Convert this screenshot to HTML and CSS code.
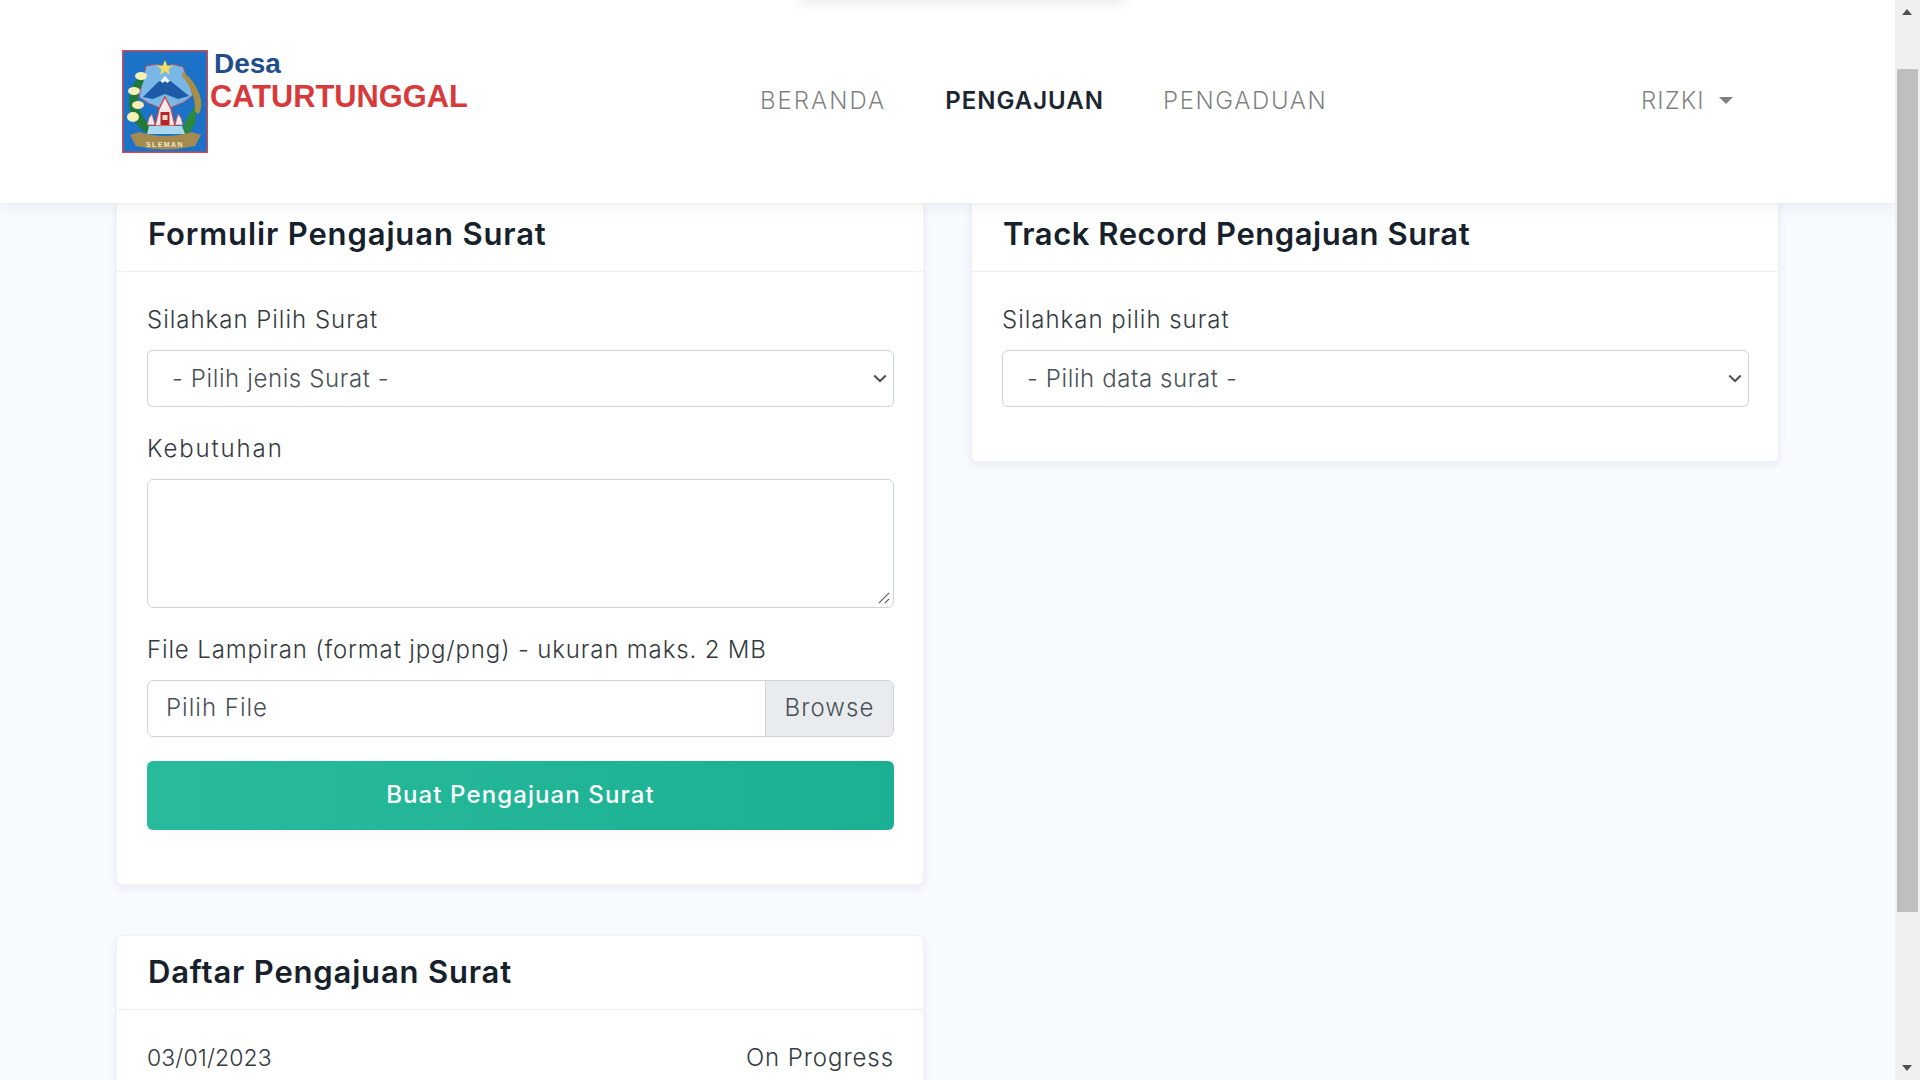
FILE: index.html
```html
<!DOCTYPE html>
<html lang="id">
<head>
<meta charset="utf-8">
<title>Desa Caturtunggal</title>
<link rel="stylesheet" href="styles.css">
</head>
<body>
<div class="app">
  <div class="viewport">
    <header class="navbar">
      <span class="offscreen-menu"></span>
      <a class="brand" href="#">
        <svg class="emblem" viewBox="0 0 86 103" aria-hidden="true">
          <rect x="0.7" y="0.7" width="84.6" height="101.6" fill="#1b72c6" stroke="#d9484f" stroke-width="1.4"/>
          <!-- shield -->
          <path d="M24 16 L36 14 L43 22 L50 14 L61 17 L71 45 L62 52 L43 60 L26 53 L17 47 Z" fill="#79b7e6" stroke="#b7525f" stroke-width="1"/>
          <!-- mountain -->
          <path d="M21 47 L35 33 L43 27 L51 33 L67 46 L56 49 L43 44 L31 49 Z" fill="#1d5ba6"/>
          <path d="M38 31 L43 26 L48 31 L45 33 L43 31 L41 33 Z" fill="#eef6fc"/>
          <!-- star -->
          <path d="M43 10 L45.2 15.4 L51 15.6 L46.5 19.2 L48 24.8 L43 21.6 L38 24.8 L39.5 19.2 L35 15.6 L40.8 15.4 Z" fill="#f2dc64"/>
          <!-- left garland -->
          <path d="M17 27 Q6 38 7 54 Q8 68 18 78 L26 84 L30 78 Q20 68 17 58 Q13 44 22 31 Z" fill="#1f7a3a"/>
          <ellipse cx="19" cy="26" rx="6" ry="4" fill="#f6efb4"/>
          <ellipse cx="12" cy="41" rx="6" ry="4" fill="#f6efb4"/>
          <ellipse cx="16" cy="55" rx="6" ry="4" fill="#f6efb4"/>
          <ellipse cx="11" cy="67" rx="6" ry="5" fill="#f6efb4"/>
          <!-- right rice and leaves -->
          <path d="M60 22 Q74 30 79 50 Q80 58 77 64 L73 62 Q74 42 60 26 Z" fill="#a98f42"/>
          <path d="M72 58 Q78 70 66 84 L60 84 Q62 70 72 58 Z" fill="#2a8a3e"/>
          <!-- temple -->
          <path d="M27 68 L30 64 L33 75 L25 75 Z M59 68 L56 64 L53 75 L61 75 Z" fill="#f5e8e8" stroke="#d84a4a" stroke-width="0.7"/>
          <path d="M43 47 L49 59 L53 76 L33 76 L37 59 Z" fill="#f6eaea" stroke="#d63f42" stroke-width="1.3"/>
          <rect x="38.5" y="62" width="9" height="13" fill="#b2272e"/>
          <rect x="40.5" y="65" width="5" height="5" fill="#f3dcc0"/>
          <!-- water -->
          <path d="M27 76 H60 L63 84 H25 Z" fill="#a8d8f0"/>
          <!-- ribbon -->
          <path d="M8 85 L17 82 Q43 90 70 82 L79 85 L73 96 Q43 103 14 96 Z" fill="#a58a50"/>
          <text class="emblem-text" x="43" y="96.5" text-anchor="middle">SLEMAN</text>
        </svg>
        <span class="wordmark">
          <span class="word-desa">Desa</span>
          <span class="word-name">CATURTUNGGAL</span>
        </span>
      </a>
      <nav class="menu">
        <a class="menu-link link-beranda" href="#">BERANDA</a>
        <a class="menu-link link-pengajuan is-active" href="#">PENGAJUAN</a>
        <a class="menu-link link-pengaduan" href="#">PENGADUAN</a>
      </nav>
      <a class="menu-link user" href="#">RIZKI<span class="caret"></span></a>
    </header>

    <main class="content">
      <div class="col">
        <section class="card">
          <h2 class="card-head head-form">Formulir Pengajuan Surat</h2>
          <form class="card-body">
            <div class="field">
              <label class="label">Silahkan Pilih Surat</label>
              <div class="select">
                <span>- Pilih jenis Surat -</span>
                <svg class="chev" viewBox="0 0 14 9"><path d="M1.2 1.5 L7 7 L12.8 1.5" fill="none" stroke="#495057" stroke-width="2"/></svg>
              </div>
            </div>
            <div class="field">
              <label class="label label-need">Kebutuhan</label>
              <div class="textarea">
                <svg class="grip" viewBox="0 0 14 14"><path d="M1 13 L13 1 M8 13 L13 8" fill="none" stroke="#555" stroke-width="1.3"/></svg>
              </div>
            </div>
            <div class="field">
              <label class="label label-file">File Lampiran (format jpg/png) - ukuran maks. 2 MB</label>
              <div class="file">
                <span class="file-name">Pilih File</span>
                <span class="file-btn">Browse</span>
              </div>
            </div>
            <button class="submit" type="button">Buat Pengajuan Surat</button>
          </form>
        </section>
        <section class="card">
          <h2 class="card-head head-list">Daftar Pengajuan Surat</h2>
          <div class="card-body">
            <div class="row"><span class="date">03/01/2023</span><span class="status">On Progress</span></div>
          </div>
        </section>
      </div>
      <div class="col">
        <section class="card">
          <h2 class="card-head head-track">Track Record Pengajuan Surat</h2>
          <div class="card-body">
            <div class="field">
              <label class="label">Silahkan pilih surat</label>
              <div class="select">
                <span>- Pilih data surat -</span>
                <svg class="chev" viewBox="0 0 14 9"><path d="M1.2 1.5 L7 7 L12.8 1.5" fill="none" stroke="#495057" stroke-width="2"/></svg>
              </div>
            </div>
          </div>
        </section>
      </div>
    </main>
  </div>
  <div class="scrollbar">
    <span class="arrow arrow-up"></span>
    <span class="thumb"></span>
    <span class="arrow arrow-down"></span>
  </div>
</div>
</body>
</html>
```
FILE: styles.css
```css
* { box-sizing: border-box; }
html, body { margin: 0; height: 100%; overflow: hidden; }
body { font-family: Inter, "Open Sans", sans-serif; font-size: 24px; font-weight: 350; color: #343a40; background: #f7faff; }
a { text-decoration: none; color: inherit; }

.app { display: flex; height: 1080px; }
.viewport { position: relative; flex: 1; min-width: 0; height: 1080px; overflow: hidden; }

.navbar {
  position: absolute; top: 0; left: 0; right: 0; z-index: 2;
  height: 203px; padding: 50px 0 0 122px;
  display: flex; align-items: flex-start;
  background: #fff;
  box-shadow: 0 2px 16px rgba(0, 0, 0, .08);
}
.offscreen-menu { position: absolute; left: 800px; top: -20px; width: 325px; height: 20px; box-shadow: 0 2px 14px rgba(0, 0, 0, .1); }
.brand { display: flex; align-items: flex-start; width: 638px; }
.emblem { width: 86px; height: 103px; flex: none; }
.emblem-text { font-family: "Liberation Sans", Arial, sans-serif; font-size: 7px; font-weight: 700; letter-spacing: 1.4px; fill: #efe6c8; }
.wordmark { display: flex; flex-direction: column; font-family: "Liberation Sans", Arial, sans-serif; font-weight: 700; line-height: 1; }
.word-desa { font-size: 28px; color: #1f4e8c; margin: 0 0 0 6px; line-height: 27px; }
.word-name { font-size: 30.8px; color: #d8393b; margin: 5px 0 0 2px; line-height: 30px; }

.menu { display: flex; gap: 59px; height: 101px; align-items: center; }
.menu-link { color: rgba(0, 0, 0, .5); font-size: 24px; font-weight: 300; }
.link-beranda { letter-spacing: 2px; }
.link-pengajuan { letter-spacing: 1px; }
.link-pengaduan { letter-spacing: 1.6px; }
.is-active { color: #1c2630; font-weight: 600; }
.user { position: absolute; left: 1641px; top: 50px; height: 101px; display: flex; align-items: center; letter-spacing: 1.1px; }
.caret { width: 0; height: 0; margin-left: 14px; border: 7px solid transparent; border-top-color: rgba(0,0,0,.5); border-bottom: 0; }

.content { display: flex; gap: 47px; padding: 197px 0 0 116px; }
.col { width: 808px; display: flex; flex-direction: column; gap: 50px; align-items: stretch; }

.card { background: #fff; border: 1px solid #f1f2f4; border-radius: 6px; box-shadow: 0 3px 8px rgba(30, 50, 90, .07); }
.card-head { margin: 0; height: 74px; padding: 0 0 2px 31px; display: flex; align-items: center; border-bottom: 1.5px solid #edeff2; font-size: 31px; font-weight: 600; color: #17212b; }
.head-form { letter-spacing: .87px; }
.head-list { letter-spacing: .82px; }
.head-track { letter-spacing: .55px; }
.card-body { padding: 30px 30px 54px 30px; display: flex; flex-direction: column; }

.field { display: flex; flex-direction: column; margin-bottom: 24px; }
.field:last-child { margin-bottom: 0; }
.label { line-height: 36px; margin-bottom: 12px; letter-spacing: .98px; }
.label-need { letter-spacing: 1.87px; }
.label-file { letter-spacing: .85px; }
.select, .textarea, .file {
  width: 747px; border: 1.5px solid #ced4da; border-radius: 6px; background: #fff;
}
.select { height: 57px; display: flex; align-items: center; justify-content: space-between; padding: 0 6px 0 24px; color: #495057; letter-spacing: .6px; }
.chev { width: 14px; height: 9px; }
.textarea { height: 129px; position: relative; }
.grip { position: absolute; right: 3px; bottom: 3px; width: 12px; height: 12px; }
.file { height: 57px; display: flex; align-items: stretch; overflow: hidden; color: #495057; }
.file-name { flex: 1; display: flex; align-items: center; padding: 0 0 2px 18px; letter-spacing: 1px; }
.file-btn { width: 128px; display: flex; align-items: center; justify-content: center; padding-bottom: 2px; background: #e9ecef; border-left: 1.5px solid #ced4da; letter-spacing: 1.1px; }
.submit { width: 747px; height: 69px; padding: 0 0 2px; border: 0; border-radius: 6px; font: inherit; font-weight: 500; color: #fff; background: linear-gradient(90deg, #27bb9b, #1bb092); letter-spacing: 1.1px; box-shadow: 0 8px 24px rgba(0,0,0,.02); }

.row { display: flex; justify-content: space-between; width: 747px; line-height: 36px; }
.date { font-size: 23px; letter-spacing: .1px; }
.status { letter-spacing: .92px; }

.scrollbar { position: relative; flex: none; width: 25px; height: 1080px; background: #f0f0f0; display: flex; flex-direction: column; align-items: center; }
.thumb { position: absolute; left: 2px; top: 69px; width: 21px; height: 843px; background: #bfbfbf; }
.arrow { position: absolute; left: 7px; width: 0; height: 0; border: 5.5px solid transparent; }
.arrow-up { top: 9px; border-top: 0; border-bottom: 6px solid #505050; }
.arrow-down { bottom: 9px; border-bottom: 0; border-top: 6px solid #505050; }
```
